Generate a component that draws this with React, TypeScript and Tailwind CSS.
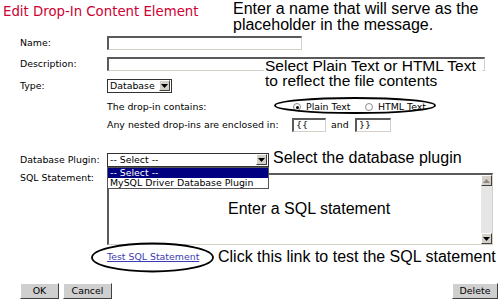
const verdana = { fontFamily: '"DejaVu Sans", Verdana, sans-serif' };
const arial = { fontFamily: '"Liberation Sans", Arial, sans-serif' };

const sunken =
  "border-t-2 border-l-2 border-b border-r border-t-[#5a5a5a] border-l-[#5a5a5a] border-b-[#d4d0c8] border-r-[#d4d0c8] bg-white";

function Arrow({ dir = "down" }: { dir?: "down" | "up" }) {
  return (
    <span className="flex h-[11px] w-[11px] items-center justify-center border border-t-white border-l-white border-b-[#404040] border-r-[#404040] bg-[#d4d0c8]">
      <svg width="7" height="4" viewBox="0 0 7 4">
        {dir === "down" ? (
          <path d="M0 0h7L3.5 4z" fill="#000" />
        ) : (
          <path d="M0 4h7L3.5 0z" fill="#8a8a8a" />
        )}
      </svg>
    </span>
  );
}

function Radio({ checked }: { checked?: boolean }) {
  return (
    <span className="flex h-[8px] w-[8px] items-center justify-center rounded-full border border-[#8a8a8a] bg-white">
      {checked && <span className="h-[3px] w-[3px] rounded-full bg-black" />}
    </span>
  );
}

function Button({ label, w }: { label: string; w: string }) {
  return (
    <button
      className={`${w} h-[16px] border border-t-white border-l-white border-b-[#404040] border-r-[#404040] bg-[#cfcfcf] text-[9.4px] leading-none text-black`}
      style={verdana}
    >
      {label}
    </button>
  );
}

export default function App() {
  return (
    <div className="relative h-[299px] w-[500px] overflow-hidden bg-white text-black">
      <div className="flex flex-col text-[9.4px] leading-[12px]" style={verdana}>
        <h1 className="mt-[4px] h-[16px] pl-[3px] text-[13.3px] leading-[16px] text-[#cc0033]">
          Edit Drop-In Content Element
        </h1>

        {/* Name */}
        <div className="mt-[15px] flex h-[15px] items-center">
          <span className="w-[107px] pl-[20px]">Name:</span>
          <div className={`h-[14px] w-[195px] ${sunken}`} />
        </div>

        {/* Description */}
        <div className="mt-[6px] flex h-[15px] items-center">
          <span className="w-[107px] pl-[20px]">Description:</span>
          <div className={`h-[14px] w-[378px] ${sunken}`} />
        </div>

        {/* Type */}
        <div className="mt-[7px] flex h-[15px] items-center">
          <span className="w-[107px] pl-[20px]">Type:</span>
          <div className="flex h-[14px] w-[65px] items-center justify-between border border-[#333] bg-white pl-[2px] pr-[1px]">
            <span>Database</span>
            <Arrow />
          </div>
        </div>

        {/* Drop-in contains */}
        <div className="mt-[7px] flex h-[14px] items-center pl-[107px]">
          <span className="w-[186px]">The drop-in contains:</span>
          <Radio checked />
          <span className="ml-[5px] w-[59px]">Plain Text</span>
          <Radio />
          <span className="ml-[5px]">HTML Text</span>
        </div>

        {/* Nested */}
        <div className="mt-[3px] flex h-[15px] items-center pl-[107px]">
          <span className="w-[185px]">Any nested drop-ins are enclosed in:</span>
          <div className={`flex h-[14px] w-[34px] items-center pl-[2px] ${sunken}`}>{"{{"}</div>
          <span className="ml-[5px] w-[24px]">and</span>
          <div className={`flex h-[14px] w-[36px] items-center pl-[2px] ${sunken}`}>{"}}"}</div>
        </div>

        {/* Database plugin */}
        <div className="mt-[20px] flex h-[15px] items-center">
          <span className="w-[107px] pl-[20px]">Database Plugin:</span>
          <div className="flex h-[14px] w-[162px] items-center justify-between border border-[#333] bg-white pl-[2px] pr-[1px]">
            <span>-- Select --</span>
            <Arrow />
          </div>
        </div>

        {/* SQL statement */}
        <div className="mt-[6px] flex h-[72px] items-start">
          <span className="-mt-[1px] w-[107px] pl-[20px]">SQL Statement:</span>
          <div className={`flex h-[72px] w-[386px] justify-end ${sunken}`}>
            <div className="flex w-[11px] flex-col justify-between bg-[#e6e6e6]">
              <Arrow dir="up" />
              <Arrow />
            </div>
          </div>
        </div>

        {/* Test link */}
        <div className="mt-[5px] flex h-[14px] items-center pl-[107px]">
          <a className="text-[#3b3bb3] underline">Test SQL Statement</a>
        </div>

        {/* Buttons */}
        <div className="mt-[19px] flex h-[16px] items-center pl-[20px] pr-[2px]">
          <Button label="OK" w="w-[39px]" />
          <span className="ml-[4px]">
            <Button label="Cancel" w="w-[49px]" />
          </span>
          <span className="ml-auto">
            <Button label="Delete" w="w-[46px]" />
          </span>
        </div>
      </div>

      {/* Open dropdown list */}
      <div
        className="absolute left-[107px] top-[167px] flex w-[162px] flex-col border border-[#555] bg-white text-[9.4px] leading-[10px]"
        style={verdana}
      >
        <span className="bg-[#000080] pl-[2px] text-white">-- Select --</span>
        <span className="pl-[2px]">MySQL Driver Database Plugin</span>
      </div>

      {/* Annotations */}
      <svg className="pointer-events-none absolute left-0 top-0" width="500" height="299">
        <ellipse cx="355" cy="105.5" rx="80" ry="7.5" fill="none" stroke="#000" strokeWidth="1.8" />
        <ellipse cx="152.5" cy="257.5" rx="60.5" ry="14" fill="none" stroke="#000" strokeWidth="1.8" />
      </svg>
      <div className="pointer-events-none absolute inset-0 text-[16px] leading-[16px]" style={arial}>
        <p className="absolute left-[233px] top-[1px]">
          Enter a name that will serve as the
          <br />
          placeholder in the message.
        </p>
        <div className="absolute left-[264px] top-[57px] text-[15.5px]">
          <div className="mt-[2px] h-[13px] w-[218px] bg-white pl-[1px] leading-[13px]">
            Select Plain Text or HTML Text
          </div>
          <div className="mt-[1px] pl-[1px] leading-[16px]">to reflect the file contents</div>
        </div>
        <p className="absolute left-[273px] top-[150px]">Select the database plugin</p>
        <p className="absolute left-[228px] top-[201px]">Enter a SQL statement</p>
        <p className="absolute left-[218px] top-[249px]">Click this link to test the SQL statement</p>
      </div>
    </div>
  );
}
